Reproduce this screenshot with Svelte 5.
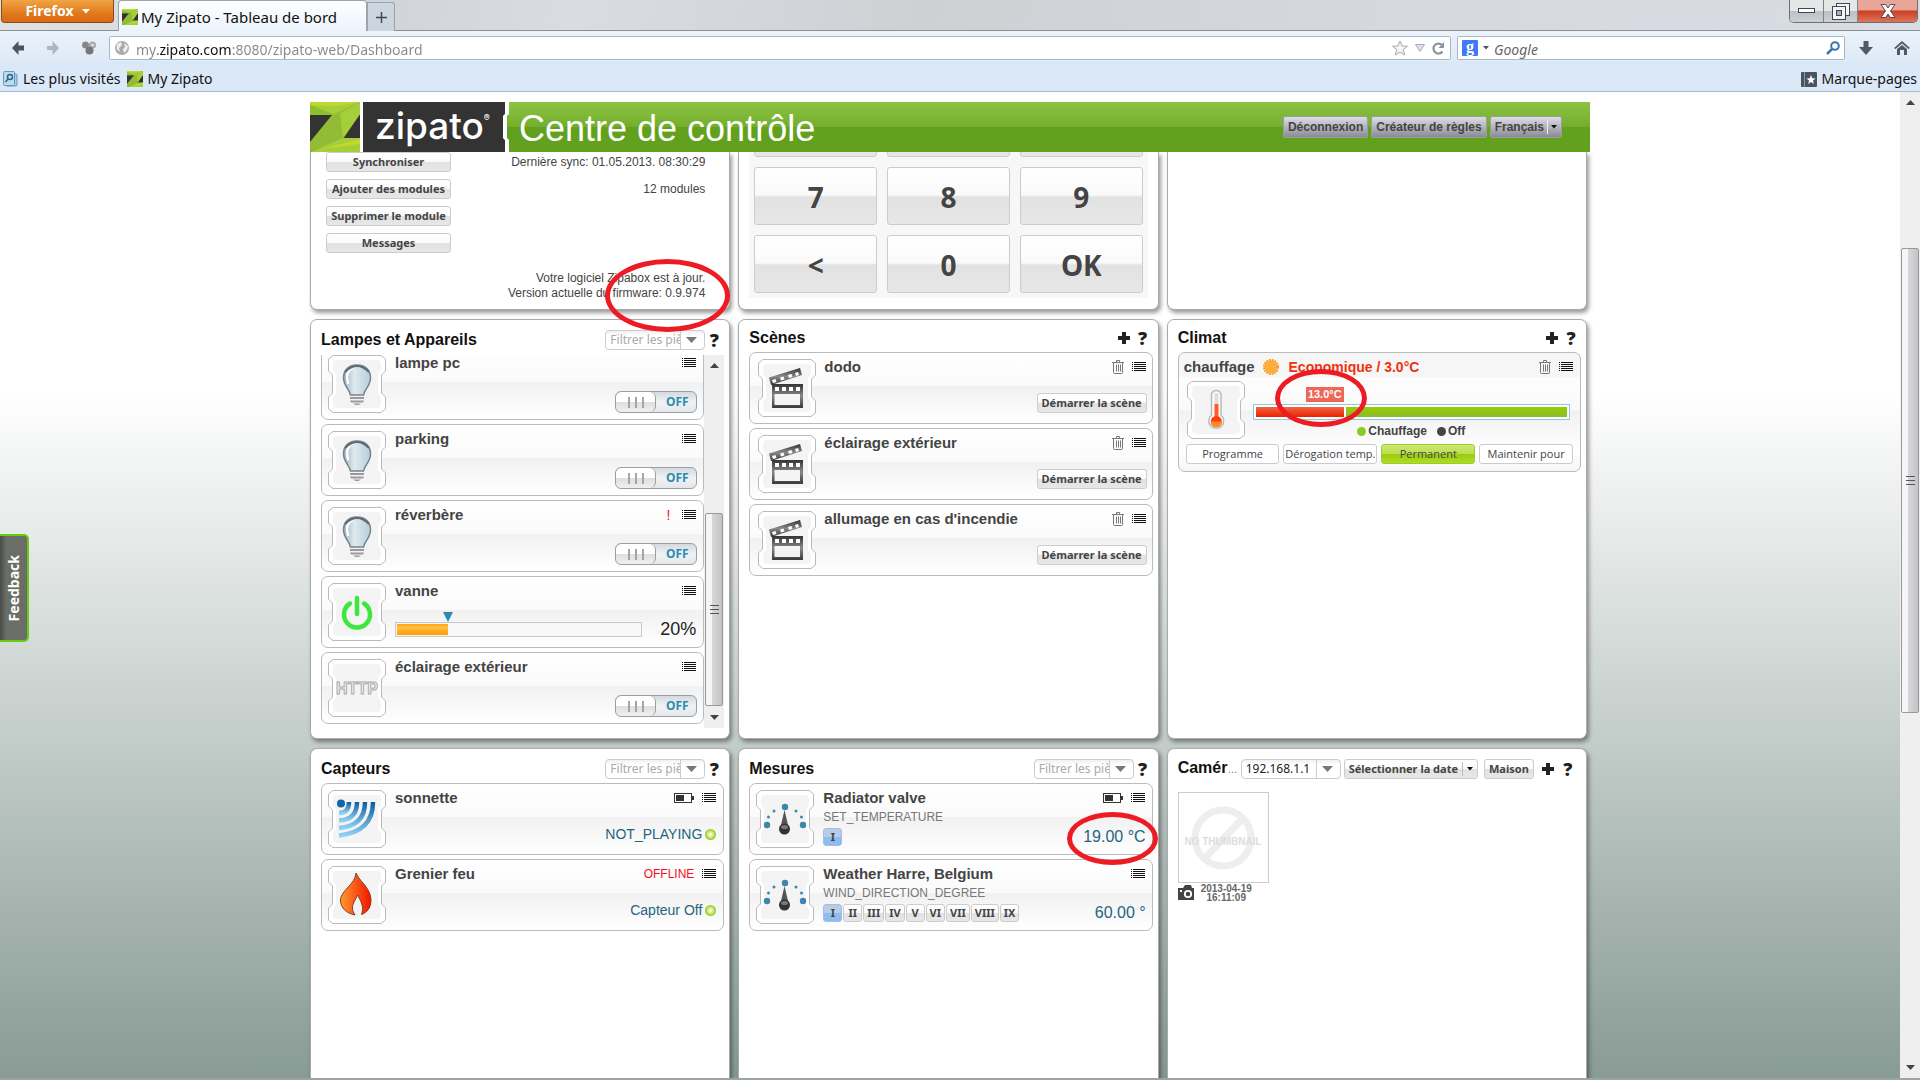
<script>
  let url = $state('my.zipato.com:8080/zipato-web/Dashboard');
  let search = $state('');
  let valve = $state(20);
  let target = $state(13);
  let mode = $state('Permanent');

  const minTemp = 5;
  const maxTemp = 33;
  const targetPct = $derived(((target - minTemp) / (maxTemp - minTemp)) * 100);

  const systemActions = ['Synchroniser', 'Ajouter des modules', 'Supprimer le module', 'Messages'];
  const keys = ['', '', '', '7', '8', '9', '<', '0', 'OK'];
  const modes = ['Programme', 'Dérogation temp.', 'Permanent', 'Maintenir pour'];

  const devices = $state([
    { name: 'lampe pc', icon: 'bulb', on: false },
    { name: 'parking', icon: 'bulb', on: false },
    { name: 'réverbère', icon: 'bulb', on: false, alert: true },
    { name: 'vanne', icon: 'power', slider: true },
    { name: 'éclairage extérieur', icon: 'http', on: false },
  ]);

  const scenes = ['dodo', 'éclairage extérieur', "allumage en cas d'incendie"];

  const sensors = [
    { name: 'sonnette', icon: 'waves', battery: true, value: 'NOT_PLAYING' },
    { name: 'Grenier feu', icon: 'flame', offline: true, value: 'Capteur Off' },
  ];

  const meters = [
    { name: 'Radiator valve', attr: 'SET_TEMPERATURE', battery: true, value: '19.00 °C', tabs: ['I'], marked: true },
    {
      name: 'Weather Harre, Belgium',
      attr: 'WIND_DIRECTION_DEGREE',
      value: '60.00 °',
      tabs: ['I', 'II', 'III', 'IV', 'V', 'VI', 'VII', 'VIII', 'IX'],
    },
  ];
</script>

{#snippet zlogo(size)}
  <svg class="zlogo" width={size} height={size} viewBox="0 0 50 50" aria-hidden="true">
    <rect width="50" height="50" fill="#333" />
    <path d="M0 0H50V13H0Z" fill="#a4cf39" />
    <path d="M0 0H50L26 4L0 3Z" fill="#c3d82f" />
    <path d="M0 3L26 13H0Z" fill="#8cbf30" />
    <path d="M22 13L50 0V12L33 37L0 50V40Z" fill="#94bb35" />
    <path d="M30 11L50 0V12L33 36Z" fill="#a4cf39" />
    <path d="M0 50L33 36H50V50Z" fill="#a4cf39" />
    <path d="M12 47L50 37V42Z" fill="#c3d82f" />
  </svg>
{/snippet}

{#snippet menuIcon()}
  <button class="icon-btn" aria-label="Menu">
    <svg width="14" height="10" viewBox="0 0 14 10" shape-rendering="crispEdges">
      <path d="M0 .5H1M2 .5H14M0 2.5H1M2 2.5H14M0 4.5H1M2 4.5H14M0 6.5H1M2 6.5H14M0 8.5H1M2 8.5H14" stroke="#111" />
    </svg>
  </button>
{/snippet}

{#snippet trashIcon()}
  <button class="icon-btn" aria-label="Supprimer">
    <svg width="12" height="14" viewBox="0 0 12 14" fill="none" stroke="#777">
      <path d="M0 2.5H12M4.5 2V.5H7.5V2M1.5 3V12.5Q1.5 13.5 2.5 13.5H9.5Q10.5 13.5 10.5 12.5V3M4.5 4.5V11.5M6.5 4.5V11.5M8.5 4.5V11.5" />
    </svg>
  </button>
{/snippet}

{#snippet batteryIcon()}
  <svg width="20" height="10" viewBox="0 0 20 10" aria-hidden="true">
    <rect x=".5" y=".5" width="17" height="9" fill="#fff" stroke="#333" />
    <path d="M2 2H10V8H2ZM18 3H20V7H18Z" fill="#333" />
  </svg>
{/snippet}

{#snippet plusIcon()}
  <button class="icon-btn" aria-label="Ajouter">
    <svg width="12" height="12" viewBox="0 0 12 12"><path d="M4 0H8V4H12V8H8V12H4V8H0V4H4Z" fill="#222" /></svg>
  </button>
{/snippet}

{#snippet caret()}
  <svg width="6" height="4" viewBox="0 0 6 4" aria-hidden="true"><path d="M0 0H6L3 3.5Z" fill="#111" /></svg>
{/snippet}

{#snippet combo(text, label, muted)}
  <span class="combo" class:muted>
    <select aria-label={label}><option>{text}</option></select>
    <svg width="24" height="18" viewBox="0 0 24 18" aria-hidden="true">
      <path d="M.5 0V18" stroke="#ccc" /><path d="M6 6H17L11.5 12Z" fill="#777" />
    </svg>
  </span>
{/snippet}

{#snippet tile(icon)}
  <svg class="tile" width="58" height="58" viewBox="0 0 58 58" aria-hidden="true">
    <defs>
      <linearGradient id="g-glass" x1="0" x2="1"><stop offset="0" stop-color="#9fb2bf" /><stop offset=".4" stop-color="#dfe9ef" /><stop offset="1" stop-color="#b8cddb" /></linearGradient>
      <linearGradient id="g-steel" x1="0" x2="0" y1="0" y2="1"><stop offset="0" stop-color="#333" /><stop offset=".5" stop-color="#888" /><stop offset="1" stop-color="#3a3a3a" /></linearGradient>
      <linearGradient id="g-fire" x1="0" x2="1"><stop offset="0" stop-color="#ff9a2e" /><stop offset="1" stop-color="#f21500" /></linearGradient>
      <linearGradient id="g-wave" x1="0" x2="0" y1="0" y2="1"><stop offset="0" stop-color="#0a5c9e" /><stop offset="1" stop-color="#8fd0f5" /></linearGradient>
    </defs>
    <path
      d="M5 .5H53L57.5 4V16L53.500 20V38L57.500 42V54L53 57.500H5L.5 54V42L4.500 38V20L.5 16V4Z"
      fill="#fff"
      stroke="#bbb"
      stroke-linejoin="round"
    />
    <path d="M7 5H51L53 8V15L50 19V39L53 43V50L51 53H7L5 50V43L8 39V19L5 15V8Z" fill="#f4f4f4" />
    {#if icon === 'bulb'}
      <path d="M29 10C20 10 15.500 16 15.500 23C15.500 31 21.500 34 22.500 40H35.500C36.500 34 42.500 31 42.500 23C42.500 16 38 10 29 10Z" fill="url(#g-glass)" stroke="#76828a" stroke-width="1.500" />
      <path d="M24 13C19 16 18 22 20 28" fill="none" stroke="#fff" stroke-width="2.500" stroke-linecap="round" />
      <path d="M17 17Q29 5 41 17" fill="none" stroke="#5f6b73" stroke-width="2" />
      <path d="M22 42H36V44H22ZM22 45.500H36L35 47.500H23ZM25 48.500H33L30.500 50H27.500Z" fill="#999" />
    {:else if icon === 'power'}
      <path d="M22 20.500A13 13 0 1 0 36 20.500" fill="none" stroke="#3de83d" stroke-width="4.500" stroke-linecap="round" />
      <path d="M29 15V31" stroke="#3de83d" stroke-width="4.500" stroke-linecap="round" />
    {:else if icon === 'http'}
      <text x="29" y="35" text-anchor="middle" class="http">HTTP</text>
    {:else if icon === 'clapper'}
      <path d="M11 18.500L42 9L44 16L13 26Z" fill="url(#g-steel)" />
      <path d="M14 21L17.500 20L18.500 23L15 24ZM22 18.500L25.500 17.500L26.500 20.500L23 21.500ZM30 16L33.500 15L34.500 18L31 19ZM37 14L40 13L41 16L38 17Z" fill="#fff" />
      <path d="M14 25H45V49H14ZM16.500 35V46H42V35Z" fill="url(#g-steel)" fill-rule="evenodd" />
      <path d="M17 28H21V32H17ZM24 28H28V32H24ZM31 28H35V32H31ZM38 28H42V32H38Z" fill="#fff" />
    {:else if icon === 'thermo'}
      <path d="M24.500 13A5 5 0 0 1 34 13V34A7.500 7.500 0 1 1 24.500 34Z" fill="#fafafa" stroke="#bbb" stroke-width="1.500" />
      <rect x="27.500" y="23" width="4" height="14" fill="#ff5a2a" />
      <rect x="27.500" y="12" width="4" height="11" fill="#ddd" />
      <circle cx="29.300" cy="40.500" r="5.500" fill="#ff3c10" />
      <path d="M24 40.500A5.500 5.500 0 0 0 35 40.500Z" fill="#ff8a2a" />
    {:else if icon === 'waves'}
      <circle cx="13" cy="13.500" r="4" fill="#0f65a8" />
      <g fill="none" stroke="url(#g-wave)" stroke-width="4.500">
        <path d="M11 23Q21 23 21 12" /><path d="M11 30.500Q29 30 29 12" /><path d="M11 38Q37 36 37 12" /><path d="M11 45.500Q45 42 45 12" />
      </g>
    {:else if icon === 'flame'}
      <path
        d="M28 7C31 15 43 22 43 34C43 41 40 46 33.500 48.500C36 42 34 37 29.500 29C27 36 21 40 27 49C18 47 12.500 42 12.500 34C13 24 27 19 28 7Z"
        fill="url(#g-fire)"
        stroke="#8c3a1c"
      />
    {:else if icon === 'gauge'}
      <g fill="#3e86ad">
        <circle cx="29" cy="17" r="3.200" /><circle cx="11" cy="35" r="3.200" /><circle cx="47" cy="35" r="3.200" />
        <circle cx="18" cy="21" r="1.500" /><circle cx="40" cy="21" r="1.500" /><circle cx="12.500" cy="27" r="1.500" /><circle cx="45.500" cy="27" r="1.500" />
      </g>
      <path d="M28.500 20L32.500 37H24.500Z" fill="#555" />
      <circle cx="28.500" cy="39" r="5.500" fill="#333" />
      <ellipse cx="28.500" cy="37" rx="3.500" ry="2" fill="#777" />
    {/if}
  </svg>
{/snippet}

<div class="window">
  <div class="titlebar">
    <button class="firefox">Firefox <svg width="8" height="5" viewBox="0 0 8 5"><path d="M0 0H8L4 4.500Z" fill="#fff" /></svg></button>
    <div class="tab">{@render zlogo(16)}<span>My Zipato - Tableau de bord</span></div>
    <button class="newtab" aria-label="Nouvel onglet">
      <svg width="11" height="11" viewBox="0 0 11 11"><path d="M5.500 0V11M0 5.500H11" stroke="#445" stroke-width="1.500" /></svg>
    </button>
    <div class="controls">
      <button aria-label="Réduire"><svg width="18" height="6" viewBox="0 0 18 6"><rect x=".5" y=".5" width="16" height="4" fill="#fff" stroke="#445" /></svg></button>
      <button aria-label="Restaurer">
        <svg width="18" height="17" viewBox="0 0 18 17" fill="#f4f4f4" stroke="#445">
          <rect x="4.500" y=".5" width="13" height="12" /><rect x=".5" y="3.500" width="13" height="13" /><rect x="4.500" y="7.500" width="5" height="5" fill="#aab" />
        </svg>
      </button>
      <button class="close" aria-label="Fermer">
        <svg width="16" height="14" viewBox="0 0 16 14"><path d="M1 .5H5.500L8 4L10.500.5H15L10.500 7L15 13.500H10.500L8 10L5.500 13.500H1L5.500 7Z" fill="#fff" stroke="#534a5a" /></svg>
      </button>
    </div>
  </div>

  <div class="navbar">
    <div class="navicons">
      <button class="icon-btn" aria-label="Précédent">
        <svg width="14" height="14" viewBox="0 0 14 14"><path d="M7.500 0L1 7L7.500 14V9.500H13V4.500H7.500Z" fill="#4a5560" /></svg>
      </button>
      <button class="icon-btn" aria-label="Suivant">
        <svg width="14" height="14" viewBox="0 0 14 14"><path d="M6.500 0L13 7L6.500 14V9H1V5H6.500Z" fill="#a9b7c4" /></svg>
      </button>
      <button class="icon-btn" aria-label="Module">
        <svg width="16" height="14" viewBox="0 0 16 14"><circle cx="4.500" cy="4" r="3.500" fill="#888" /><circle cx="11.500" cy="4" r="3.500" fill="#aaa" /><circle cx="8.500" cy="9.500" r="4" fill="#777" /><circle cx="11.500" cy="4" r="1.500" fill="#ddd" /></svg>
      </button>
    </div>
    <div class="field address">
      <svg width="14" height="14" viewBox="0 0 14 14" aria-hidden="true">
        <circle cx="7" cy="7" r="7" fill="#aaa" /><path d="M2 3L6 1L7 4L4 7L5 11L1.500 8ZM9 2L13 5L12 9L9 12L8 8L10 6Z" fill="#eee" />
      </svg>
      <input class="url" aria-label="Adresse" bind:value={url} />
      <svg width="16" height="16" viewBox="0 0 16 16"><path d="M8 1L10 6L15.500 6.300L11.300 9.500L12.800 15L8 12L3.200 15L4.700 9.500L.5 6.300L6 6Z" fill="#f4f4f4" stroke="#aaa" /></svg>
      <svg width="10" height="8" viewBox="0 0 10 8"><path d="M.5.5H9.500L5 7.500Z" fill="#dde" stroke="#aab" /></svg>
      <button class="icon-btn" aria-label="Actualiser">
        <svg width="13" height="13" viewBox="0 0 13 13"><path d="M10.500 9.500A5 5 0 1 1 10 3" fill="none" stroke="#8795a4" stroke-width="2.200" /><path d="M12 0V6H6.500Z" fill="#8795a4" /></svg>
      </button>
    </div>
    <div class="field searchbox">
      <span class="goog">g</span>
      <svg width="6" height="4" viewBox="0 0 6 4"><path d="M0 0H6L3 3.500Z" fill="#555" /></svg>
      <input aria-label="Recherche" placeholder="Google" bind:value={search} />
      <svg width="14" height="14" viewBox="0 0 14 14"><circle cx="9" cy="5" r="3.800" fill="none" stroke="#3c78b4" stroke-width="2" /><path d="M6 8L1 13" stroke="#3c78b4" stroke-width="2.500" /></svg>
    </div>
    <button class="icon-btn" aria-label="Téléchargements">
      <svg width="14" height="14" viewBox="0 0 14 14"><path d="M4.500 0H9.500V6H14L7 14L0 6H4.500Z" fill="#4f5a64" /></svg>
    </button>
    <button class="icon-btn" aria-label="Accueil">
      <svg width="16" height="14" viewBox="0 0 16 14"><path d="M8 0L0 7L1.500 8L8 2.500L14.500 8L16 7Z" fill="#4f5a64" /><path d="M3 8L8 4L13 8V14H10V9H6V14H3Z" fill="#4f5a64" /></svg>
    </button>
  </div>

  <div class="bookmarks">
    <a href="#visites">
      <svg width="15" height="16" viewBox="0 0 15 16"><rect x="3" y="3" width="11" height="12" rx="1" fill="#a9d0e6" stroke="#5f9dc0" /><rect x=".5" y=".5" width="11" height="14" rx="1" fill="#b9dcee" stroke="#5f9dc0" /><circle cx="7" cy="6" r="2.500" fill="none" stroke="#33638a" stroke-width="1.500" /><path d="M5 8L2.500 11" stroke="#33638a" stroke-width="1.500" /></svg>
      Les plus visités
    </a>
    <a href="#zipato">{@render zlogo(16)} My Zipato</a>
    <a href="#marques" class="last">
      <svg width="16" height="15" viewBox="0 0 16 15"><rect width="16" height="15" rx="1" fill="#4a545e" /><path d="M3.500 0V15" stroke="#8a949e" /><path d="M10 3L11.300 6.200L14.500 6.400L12 8.500L12.800 12L10 10L7.200 12L8 8.500L5.500 6.400L8.700 6.200Z" fill="#fff" /></svg>
      Marque-pages
    </a>
  </div>

  <div class="viewport">
    <main>
      <header class="banner">
        {@render zlogo(50)}
        <svg class="bracket" width="3" height="50" viewBox="0 0 3 50"><rect width="3" height="50" fill="#fff" /></svg>
        <span class="brand">zipato<sup>®</sup></span>
        <svg class="bracket" width="7" height="50" viewBox="0 0 7 50">
          <path d="M0 0H2V12L0 14V36L2 38V50H0Z" fill="#333" />
          <path d="M2 0H6V12L4 14V36L6 38V50H2V38L0 36V14L2 12Z" fill="#fff" />
        </svg>
        <h1>Centre de contrôle</h1>
        <nav>
          <button>Déconnexion</button>
          <button>Créateur de règles</button>
          <button>Français<i></i>{@render caret()}</button>
        </nav>
      </header>

      <div class="grid">
        <section class="panel cut system">
          <div class="actions-col">
            {#each systemActions as action}
              <button class="btn">{action}</button>
            {/each}
          </div>
          <div class="status">
            <p>Dernière sync: 01.05.2013. 08:30:29</p>
            <p>12 modules</p>
            <p class="firmware">Votre logiciel Zipabox est à jour.<br />Version actuelle du firmware: 0.9.974</p>
          </div>
          <span class="mark mark-firmware"></span>
        </section>

        <section class="panel cut">
          <div class="keypad">
            {#each keys as key}
              <button class="btn">{key}</button>
            {/each}
          </div>
        </section>

        <section class="panel cut"></section>

        <section class="panel">
          <div class="head tall">
            <h2>Lampes et Appareils</h2>
            {@render combo('Filtrer les piè', 'Filtrer les pièces', true)}
            <button class="help">?</button>
          </div>
          <div class="scroller">
            <div class="list">
              {#each devices as device}
                <article class="card">
                  {@render tile(device.icon)}
                  <div class="body">
                    <div class="row">
                      <h3>{device.name}</h3>
                      {#if device.alert}<span class="alert">!</span>{/if}
                      {@render menuIcon()}
                    </div>
                    {#if device.slider}
                      <div class="row dim">
                        <input type="range" aria-label={device.name} min="0" max="100" bind:value={valve} style="--pct: {valve}%" />
                        <output>{valve}%</output>
                      </div>
                    {:else}
                      <label class="switch">
                        <input type="checkbox" aria-label={device.name} bind:checked={device.on} />
                        <span class="knob"><i></i><i></i><i></i></span>
                        <span>{device.on ? 'ON' : 'OFF'}</span>
                      </label>
                    {/if}
                  </div>
                </article>
              {/each}
            </div>
            <div class="scrollbar">
              <svg width="9" height="5" viewBox="0 0 9 5"><path d="M0 5L4.500 0L9 5Z" fill="#444" /></svg>
              <span class="thumb"><i></i><i></i><i></i></span>
              <svg width="9" height="5" viewBox="0 0 9 5"><path d="M0 0L4.500 5L9 0Z" fill="#444" /></svg>
            </div>
          </div>
        </section>

        <section class="panel">
          <div class="head">
            <h2>Scènes</h2>
            {@render plusIcon()}
            <button class="help">?</button>
          </div>
          <div class="list scenes">
            {#each scenes as scene}
              <article class="card">
                {@render tile('clapper')}
                <div class="body">
                  <div class="row">
                    <h3>{scene}</h3>
                    {@render trashIcon()}
                    {@render menuIcon()}
                  </div>
                  <button class="btn start">Démarrer la scène</button>
                </div>
              </article>
            {/each}
          </div>
        </section>

        <section class="panel">
          <div class="head">
            <h2>Climat</h2>
            {@render plusIcon()}
            <button class="help">?</button>
          </div>
          <article class="card climate">
            <div class="row">
              <h3>chauffage</h3>
              <svg width="16" height="16" viewBox="0 0 16 16" aria-hidden="true">
                <circle cx="8" cy="8" r="6.500" fill="#fdae3c" /><circle cx="8" cy="8" r="7" fill="none" stroke="#f79a1e" stroke-width="2" stroke-dasharray="1.800 1" />
              </svg>
              <strong>Economique / 3.0°C</strong>
              {@render trashIcon()}
              {@render menuIcon()}
            </div>
            <div class="thermostat">
              {@render tile('thermo')}
              <div class="gauge">
                <div class="track">
                  <output style="right: {100 - targetPct}%">{target.toFixed(1)}°C</output>
                  <input type="range" aria-label="Température" min={minTemp} max={maxTemp} bind:value={target} style="--pct: {targetPct}%" />
                </div>
                <div class="legend">
                  <span class="dot"></span>Chauffage <span class="dot off"></span>Off
                </div>
                <span class="mark mark-target"></span>
              </div>
            </div>
            <div class="modes">
              {#each modes as m}
                <button class:active={mode === m} onclick={() => (mode = m)}>{m}</button>
              {/each}
            </div>
          </article>
        </section>

        <section class="panel open">
          <div class="head tall">
            <h2>Capteurs</h2>
            {@render combo('Filtrer les piè', 'Filtrer les pièces', true)}
            <button class="help">?</button>
          </div>
          <div class="list">
            {#each sensors as sensor}
              <article class="card">
                {@render tile(sensor.icon)}
                <div class="body">
                  <div class="row">
                    <h3>{sensor.name}</h3>
                    {#if sensor.battery}{@render batteryIcon()}{/if}
                    {#if sensor.offline}<span class="offline">OFFLINE</span>{/if}
                    {@render menuIcon()}
                  </div>
                  <div class="reading">{sensor.value}<span class="led"></span></div>
                </div>
              </article>
            {/each}
          </div>
        </section>

        <section class="panel open">
          <div class="head tall">
            <h2>Mesures</h2>
            {@render combo('Filtrer les piè', 'Filtrer les pièces', true)}
            <button class="help">?</button>
          </div>
          <div class="list">
            {#each meters as meter}
              <article class="card">
                {@render tile('gauge')}
                <div class="body">
                  <div class="row">
                    <h3>{meter.name}</h3>
                    {#if meter.battery}{@render batteryIcon()}{/if}
                    {@render menuIcon()}
                  </div>
                  <p class="attr">{meter.attr}</p>
                  <div class="row tabs">
                    {#each meter.tabs as tab, i}
                      <button class="btn" class:selected={i === 0}>{tab}</button>
                    {/each}
                    <span class="value">{meter.value}</span>
                  </div>
                </div>
                {#if meter.marked}<span class="mark mark-value"></span>{/if}
              </article>
            {/each}
          </div>
        </section>

        <section class="panel open">
          <div class="head tall camera">
            <h2>Camér<small>…</small></h2>
            {@render combo('192.168.1.1', 'Caméra', false)}
            <button class="btn split">Sélectionner la date<i></i>{@render caret()}</button>
            <button class="btn">Maison</button>
            {@render plusIcon()}
            <button class="help">?</button>
          </div>
          <figure>
            <svg width="91" height="91" viewBox="0 0 91 91">
              <rect x=".5" y=".5" width="90" height="90" fill="#fff" stroke="#ccc" />
              <circle cx="45" cy="46" r="28" fill="none" stroke="#eee" stroke-width="7" />
              <path d="M27 66L64 27" stroke="#eee" stroke-width="7" />
              <text x="45" y="53" text-anchor="middle" class="nothumb">NO THUMBNAIL</text>
            </svg>
            <figcaption>
              <svg width="16" height="16" viewBox="0 0 16 16"><path d="M0 4H5L7 1H13L14 4H16V16H0Z" fill="#444" /><circle cx="10" cy="10" r="3.200" fill="none" stroke="#fff" stroke-width="1.800" /><path d="M2 6H4V8H2Z" fill="#fff" /></svg>
              <span>2013-04-19<br />16:11:09</span>
            </figcaption>
          </figure>
        </section>
      </div>
    </main>

    <button class="feedback">Feedback</button>

    <div class="scrollbar page-scroll">
      <svg width="9" height="5" viewBox="0 0 9 5"><path d="M0 5L4.500 0L9 5Z" fill="#444" /></svg>
      <span class="thumb"><i></i><i></i><i></i></span>
      <svg width="9" height="5" viewBox="0 0 9 5"><path d="M0 0L4.500 5L9 0Z" fill="#444" /></svg>
    </div>
  </div>
</div>

<style>
  :global(body) {
    overflow: hidden;
  }

  .window,
  .window :global(*) {
    box-sizing: border-box;
  }

  .window {
    height: 100vh;
    display: flex;
    flex-direction: column;
    color: #444;
    font: 12px/15px 'Liberation Sans', Arial, sans-serif;
  }

  button,
  input,
  select {
    margin: 0;
    padding: 0;
    border: 0;
    background: none;
    color: inherit;
    font: inherit;
  }

  h1,
  h2,
  h3,
  p,
  figure {
    margin: 0;
  }

  svg {
    flex: none;
    display: block;
  }

  .icon-btn {
    flex: none;
    display: block;
  }

  /* browser chrome */
  .titlebar,
  .navbar,
  .bookmarks {
    flex: none;
    display: flex;
    align-items: center;
    color: #111;
    font: 14px/20px 'Noto Sans', 'Segoe UI', sans-serif;
  }

  .titlebar {
    height: 31px;
    align-items: flex-start;
    border-bottom: 1px solid #8b9096;
    background: linear-gradient(100deg, #dfe3e6 0%, #cfd3d6 18%, #d9dde2 30%, #cdd1d4 48%, #d6dadf 75%, #d8dce3 100%);
  }

  .firefox {
    width: 113px;
    height: 23px;
    margin-left: 1px;
    display: flex;
    align-items: center;
    justify-content: center;
    gap: 8px;
    border: 1px solid #8a4a10;
    border-top: 0;
    border-radius: 0 0 4px 4px;
    background: linear-gradient(#f0a545, #e27a1c 60%, #d9691a);
    color: #fff;
    font-weight: 700;
  }

  .tab {
    width: 249px;
    height: 31px;
    margin-left: 4px;
    padding: 2px 3px 0;
    display: flex;
    align-items: center;
    gap: 3px;
    border: 1px solid #9aa4ae;
    border-bottom: 0;
    border-radius: 4px 4px 0 0;
    background: linear-gradient(#fff, #ebf3fb);
    font-size: 15px;
  }

  .newtab {
    width: 28px;
    height: 29px;
    margin-top: 2px;
    display: grid;
    place-items: center;
    border: 1px solid #9aa4ae;
    border-bottom: 0;
    border-radius: 0 3px 0 0;
    background: #ccd6e0;
  }

  .controls {
    height: 23px;
    margin: 0 2px 0 auto;
    display: flex;
    overflow: hidden;
    border: 1px solid #6b6f76;
    border-top: 0;
    border-radius: 0 0 5px 5px;
  }

  .controls button {
    width: 34px;
    display: grid;
    place-items: center;
    border-right: 1px solid #7d8188;
    background: linear-gradient(#e4e6e8 50%, #bcc0c5 50%, #cdd1d6);
  }

  .controls .close {
    width: 59px;
    border: 0;
    background: linear-gradient(#e8a598 45%, #cc3f22 50%, #dd7458);
  }

  .navbar {
    height: 31px;
    padding: 3px 10px 0 11px;
    gap: 6px;
    background: linear-gradient(#ebf3fb, #dde9f7);
  }

  .navicons {
    width: 92px;
    display: flex;
    gap: 21px;
  }

  .field {
    height: 24px;
    display: flex;
    align-items: center;
    border: 1px solid #a9b9cb;
    border-radius: 2px;
    background: #fff;
  }

  .field input {
    min-width: 0;
    flex: 1;
    height: 22px;
    padding-top: 2px;
    outline: 0;
  }

  .address {
    flex: 1;
    padding: 0 5px;
    gap: 7px;
  }

  .url {
    background: linear-gradient(90deg, #888 22px, #111 22px 96px, #888 96px);
    -webkit-background-clip: text;
    background-clip: text;
    color: transparent;
  }

  .searchbox {
    width: 388px;
    margin-right: 8px;
    padding: 0 4px;
    gap: 5px;
  }

  .navbar > .icon-btn {
    margin-right: 15px;
  }

  .navbar > .icon-btn:last-child {
    margin-right: 0;
  }

  .searchbox input::placeholder {
    color: #666;
    font-style: italic;
  }

  .goog {
    width: 16px;
    height: 16px;
    border-radius: 1px;
    background: #4178f5;
    color: #fff;
    font: 700 16px/13px 'Liberation Serif', serif;
    text-align: center;
  }

  .bookmarks {
    height: 30px;
    padding: 5px 3px 0;
    gap: 6px;
    border-bottom: 1px solid #a4bbd4;
    background: #dae8f7;
  }

  .bookmarks a {
    display: flex;
    align-items: center;
    gap: 5px;
    color: inherit;
    text-decoration: none;
  }

  .bookmarks .last {
    margin-left: auto;
  }

  /* page */
  .viewport {
    position: relative;
    min-height: 0;
    flex: 1;
    display: flex;
    overflow: hidden;
    border-bottom: 2px solid #9da5a3;
    background: linear-gradient(#fff 300px, #889b94);
  }

  main {
    width: 1280px;
    margin: 0 auto;
    padding-top: 10px;
    display: flex;
    flex-direction: column;
  }

  .banner {
    position: relative;
    z-index: 1;
    flex: none;
    height: 50px;
    display: flex;
    background: linear-gradient(#8dc343, #74ad2d 50%, #62a11d 50%, #62a11d);
  }

  .brand {
    width: 140px;
    padding-left: 12px;
    background: #333;
    color: #fff;
    font: 500 37px/48px Inter, sans-serif;
    white-space: nowrap;
  }

  .brand sup {
    font-size: 9px;
    line-height: 9px;
    vertical-align: 18px;
  }

  h1 {
    margin-left: 9px;
    color: #fff;
    font-size: 36px;
    font-weight: 400;
    line-height: 54px;
  }

  nav {
    margin: 14px 28px 0 auto;
    display: flex;
    gap: 3px;
  }

  nav button {
    height: 22px;
    padding: 0 4px;
    display: flex;
    align-items: center;
    gap: 3px;
    border: 1px solid #9a9da6;
    border-radius: 2px;
    background: linear-gradient(#dcdde2, #b4b5bc 50%, #8a8b94);
    font-weight: 700;
  }

  nav i,
  .split i {
    width: 1px;
    height: 14px;
    background: #eee;
  }

  .grid {
    min-height: 0;
    flex: 1;
    padding-right: 3px;
    display: grid;
    grid-template: 158px 420px minmax(0, 1fr) / repeat(3, minmax(0, 1fr));
    gap: 9px 8px;
  }

  .panel {
    position: relative;
    padding: 0 5px 0 10px;
    border: 1px solid #aaa;
    border-radius: 7px;
    background: #fff;
    box-shadow: 2px 3px 4px rgb(0 0 0 / 40%);
  }

  .cut {
    border-top: 0;
    border-radius: 0 0 7px 7px;
  }

  .open {
    border-bottom: 0;
    border-radius: 7px 7px 0 0;
  }

  .head {
    height: 32px;
    padding: 4px 5px 0 0;
    display: flex;
    align-items: center;
    gap: 4px;
  }

  .head.tall {
    height: 34px;
    padding-top: 5px;
  }

  .head > .icon-btn {
    margin-right: 4px;
  }

  h2 {
    margin-right: auto;
    color: #111;
    font-size: 16px;
    line-height: 20px;
  }

  .help {
    width: 10px;
    color: #222;
    font: 900 18px/20px 'Noto Sans', sans-serif;
  }

  .btn {
    height: 20px;
    padding: 0 4px;
    border: 1px solid #ccc;
    border-radius: 3px;
    background: linear-gradient(#fff, #fafafa 48%, #e2e2e2 52%, #e7e7e7);
    font: 700 11px/18px 'Noto Sans', Tahoma, sans-serif;
    white-space: nowrap;
  }

  .combo {
    flex: none;
    width: 100px;
    height: 20px;
    display: flex;
    overflow: hidden;
    border: 1px solid #ccc;
    border-radius: 4px;
    background: linear-gradient(#f0f0f0, #fff 5px);
  }

  .combo select {
    width: 74px;
    height: 18px;
    padding-left: 4px;
    overflow: hidden;
    appearance: none;
    color: #222;
    font: 12px/18px 'Noto Sans', Tahoma, sans-serif;
    text-overflow: clip;
  }

  .combo.muted select {
    color: #aaa;
  }

  .system {
    padding: 0 24px 0 15px;
    display: flex;
    justify-content: space-between;
  }

  .actions-col {
    width: 125px;
    display: flex;
    flex-direction: column;
    gap: 7px;
  }

  .actions-col .btn {
    padding: 0;
  }

  .status {
    padding: 3px 0 8px;
    display: flex;
    flex-direction: column;
    gap: 12px;
    text-align: right;
  }

  .firmware {
    margin-top: auto;
  }

  .keypad {
    height: 146px;
    margin-right: 5px;
    padding: 0 5px 5px;
    display: grid;
    grid: auto-flow 58px / repeat(3, 1fr);
    align-content: end;
    gap: 10px;
    overflow: hidden;
    background: #f7f7f7;
  }

  .keypad .btn {
    height: 58px;
    padding: 2px 0 0;
    font-size: 28px;
  }

  .scroller {
    height: 373px;
    margin-top: 1px;
    display: flex;
    overflow: hidden;
  }

  .list {
    min-width: 0;
    flex: 1;
    display: flex;
    flex-direction: column;
    gap: 4px;
  }

  .scroller .list {
    padding-bottom: 4px;
    justify-content: flex-end;
  }

  .card {
    position: relative;
    flex: none;
    height: 72px;
    padding: 6px;
    display: flex;
    gap: 9px;
    border: 1px solid #bbb;
    border-radius: 7px;
    background: linear-gradient(#fff, #fafafa 47%, #f1f1f1 48%, #fff);
  }

  .scenes .card {
    padding: 6px 5px 6px 8px;
    gap: 8px;
  }

  .body {
    min-width: 0;
    flex: 1;
    display: flex;
    flex-direction: column;
    justify-content: space-between;
  }

  .row {
    display: flex;
    align-items: center;
    gap: 8px;
  }

  .row > .icon-btn:last-child {
    margin-right: 1px;
  }

  h3 {
    margin-right: auto;
    font-size: 15px;
    line-height: 16px;
    white-space: nowrap;
  }

  .alert,
  .offline {
    color: #f01020;
    font-size: 12px;
    line-height: 14px;
  }

  .alert {
    margin-right: 4px;
    font-size: 14px;
  }

  .switch {
    position: relative;
    width: 82px;
    height: 22px;
    display: flex;
    align-self: flex-end;
    overflow: hidden;
    border: 1px solid #999fa5;
    border-radius: 6px;
    background: linear-gradient(#d5dade, #f0f2f4 50%, #e4e7ea);
    color: #2e8ab0;
    font: 700 12px/20px 'Noto Sans', Tahoma, sans-serif;
  }

  .switch input {
    position: absolute;
    opacity: 0;
  }

  .switch > span:last-child {
    flex: 1;
    padding-left: 2px;
    text-align: center;
  }

  .knob {
    width: 40px;
    display: flex;
    align-items: center;
    justify-content: center;
    gap: 5px;
    border-right: 1px solid #999fa5;
    border-radius: 6px;
    background: linear-gradient(#fff 50%, #dedede 50%, #f0f0f0);
  }

  .knob i {
    width: 2px;
    height: 11px;
    background: #a9a3a3;
  }

  .dim {
    height: 24px;
    justify-content: space-between;
  }

  .dim output {
    padding-right: 1px;
    color: #222;
    font-size: 18px;
    line-height: 20px;
  }

  input[type='range'] {
    display: block;
    appearance: none;
    cursor: pointer;
  }

  .dim input {
    width: 247px;
    height: 15px;
    border: 1px solid #c8c8c8;
    background: linear-gradient(#ffa500, #ffbf4d 30%, #ff9c00) 1px 1px / calc(var(--pct) + 2px) 11px no-repeat #f8f8f8;
  }

  .dim input::-webkit-slider-thumb {
    width: 10px;
    height: 10px;
    margin-top: -17px;
    appearance: none;
    clip-path: polygon(0 0, 100% 0, 50% 100%);
    background: #2e8ab0;
  }

  .scrollbar {
    width: 20px;
    padding: 8px 0;
    display: flex;
    flex: none;
    flex-direction: column;
    align-items: center;
    background: #efefef;
  }

  .thumb {
    width: 18px;
    height: 193px;
    margin: auto 0 9px;
    display: flex;
    flex-direction: column;
    align-items: center;
    justify-content: center;
    gap: 3px;
    border: 1px solid #999;
    border-radius: 2px;
    background: linear-gradient(90deg, #f5f5f5 35%, #d8d9db 36%, #c4c4c8);
  }

  .thumb i {
    width: 9px;
    height: 1px;
    background: #555;
  }

  .page-scroll .thumb {
    height: 465px;
    margin: 143px 0 auto;
  }

  .start {
    margin-bottom: 4px;
    align-self: flex-end;
  }

  /* climate card */
  .climate {
    height: 120px;
    padding: 6px 6px 6px 5px;
    flex-direction: column;
    gap: 6px;
    background: linear-gradient(#f6f6f6 20%, #fdfdfd 21%, #fafafa 48%, #f1f1f1 49%, #fff 82%, #f6f6f6);
  }

  .climate h3 {
    margin-right: 0;
  }

  .climate strong {
    margin-right: auto;
    padding-left: 2px;
    color: #ee3311;
    font-size: 14px;
    line-height: 16px;
  }

  .thermostat {
    height: 57px;
    padding-left: 3px;
    display: flex;
    gap: 8px;
  }

  .gauge {
    position: relative;
    min-width: 0;
    flex: 1;
    margin-right: 4px;
    padding-top: 23px;
  }

  .track {
    position: relative;
    height: 16px;
    padding: 2px;
    border: 1px solid #8cc8e0;
    background: #fff;
  }

  .track output {
    position: absolute;
    bottom: 17px;
    width: 38px;
    height: 15px;
    background: #ee6655;
    color: #fff;
    font-size: 11px;
    font-weight: 700;
    text-align: center;
  }

  .track input {
    width: 100%;
    height: 10px;
    background:
      linear-gradient(#ee6644, #ee2200) 0 0 / var(--pct) 10px no-repeat,
      linear-gradient(#9c0, #8bbb33);
  }

  .track input::-webkit-slider-thumb {
    width: 2px;
    height: 10px;
    appearance: none;
    background: #fff;
  }

  .legend {
    padding-top: 4px;
    display: flex;
    align-items: center;
    justify-content: center;
    gap: 2px;
    font-weight: 700;
    line-height: 14px;
  }

  .dot,
  .led {
    width: 9px;
    height: 9px;
    border-radius: 50%;
    background: #8c2;
  }

  .off {
    margin-left: 8px;
    background: #444;
  }

  .modes {
    padding: 0 1px 0 2px;
    display: grid;
    grid-template-columns: repeat(4, 1fr);
    gap: 4px;
  }

  .modes button {
    height: 20px;
    border: 1px solid #ccc;
    border-radius: 3px;
    background: #fff;
    font: 11px/16px 'Open Sans', Tahoma, sans-serif;
    white-space: nowrap;
  }

  .modes .active {
    border-color: #9c3;
    background: linear-gradient(#cde870, #bce050 48%, #9c1 52%, #b0dc20);
  }

  /* sensors and meters */
  .reading {
    margin-bottom: 5px;
    padding-right: 1px;
    display: flex;
    align-items: center;
    justify-content: flex-end;
    gap: 3px;
    color: #26647f;
    font-size: 14px;
    line-height: 18px;
  }

  .led {
    width: 11px;
    height: 11px;
    background: radial-gradient(#fff, #d4ea88 35%, #9c2 65%);
  }

  .attr {
    padding-top: 2px;
    color: #777;
    line-height: 18px;
  }

  .tabs {
    height: 22px;
    gap: 1px;
  }

  .tabs .btn {
    height: 18px;
    min-width: 19px;
    padding: 0 3px;
    line-height: 16px;
  }

  .tabs .selected {
    border-color: #a0bfe8;
    background: linear-gradient(#b8cce8 48%, #8fbcf0 52%);
  }

  .value {
    margin-left: auto;
    color: #26647f;
    font-size: 16px;
    line-height: 20px;
  }

  .camera {
    gap: 3px;
  }

  .camera h2 {
    flex: none;
    width: 60px;
    margin-right: 0;
    white-space: nowrap;
  }

  .camera small {
    color: #777;
    font-size: 10px;
    font-weight: 400;
  }

  .camera .btn + .btn {
    margin: 0 5px 0 3px;
  }

  .camera > .help {
    margin-left: 2px;
  }

  .split {
    display: flex;
    align-items: center;
    gap: 4px;
  }

  .split i {
    background: #bbb;
  }

  figure {
    margin-top: 9px;
  }

  figcaption {
    padding-top: 1px;
    display: flex;
    gap: 7px;
    color: #666;
    font: 700 10px/9px 'Liberation Sans', Arial, sans-serif;
    text-align: center;
  }

  .http {
    fill: #f4f4f4;
    stroke: #aaa;
    font: 700 16px 'Liberation Sans', Arial, sans-serif;
  }

  .nothumb {
    fill: #ddd;
    font: 700 10px 'Liberation Sans', Arial, sans-serif;
  }

  .mark {
    position: absolute;
    z-index: 3;
    border: 5px solid #ed1c24;
    border-radius: 50%;
    pointer-events: none;
  }

  .mark-firmware {
    top: 107px;
    right: -1px;
    width: 125px;
    height: 73px;
  }

  .mark-target {
    top: -12px;
    left: 22px;
    width: 92px;
    height: 58px;
  }

  .mark-value {
    top: 28px;
    right: -6px;
    width: 91px;
    height: 53px;
  }

  .feedback {
    position: absolute;
    top: 442px;
    left: -2px;
    width: 31px;
    height: 108px;
    border: 2px solid #66cc11;
    border-radius: 0 5px 5px 0;
    background: linear-gradient(90deg, #484b46, #6a6e66 6px);
    color: #fff;
    font: 700 14px/26px 'Noto Sans', sans-serif;
    writing-mode: sideways-lr;
  }
</style>
